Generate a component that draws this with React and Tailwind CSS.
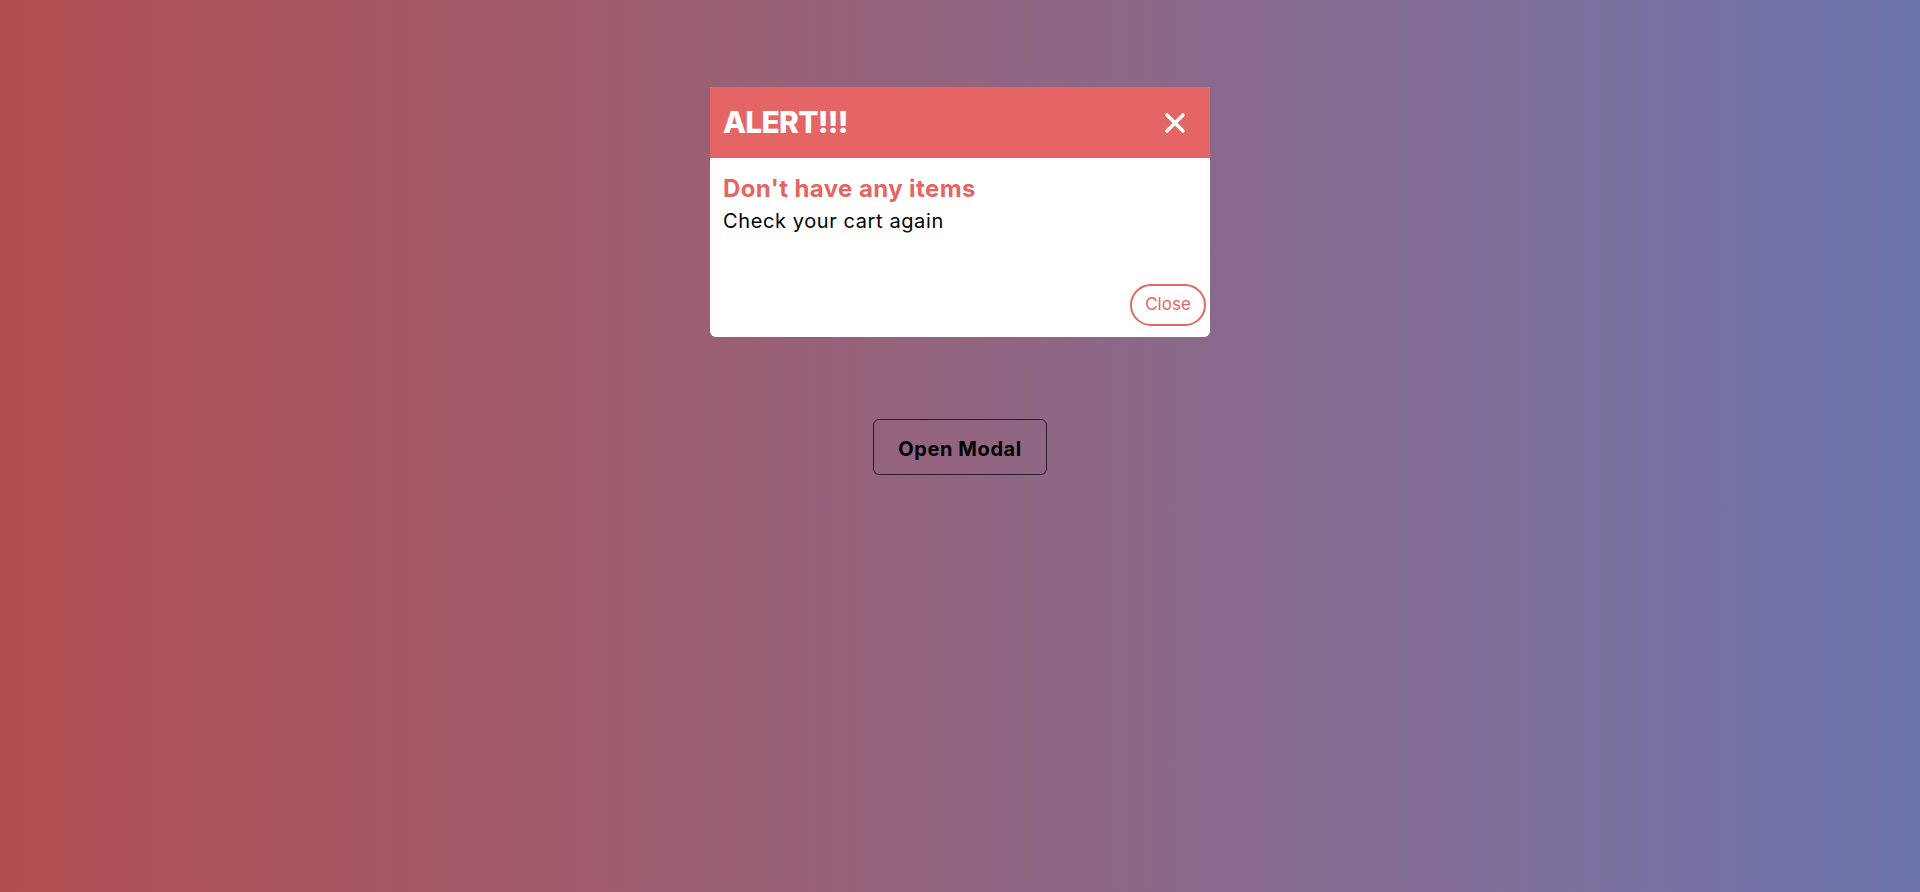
import React from 'react';

export default function App() {
  return (
    <div className="min-h-screen w-full bg-gradient-to-r from-[#b24d4f] to-[#6b73ac] font-['Inter','Noto_Sans',sans-serif] flex flex-col items-center">
      <div className="mt-[87px] w-[500px] h-[250px] bg-white rounded-b-md flex flex-col">
        <div className="h-[71px] bg-[#e56565] flex items-center justify-between pl-[13px] pr-[24px]">
          <h1 className="text-[30px] font-extrabold text-white tracking-tight">ALERT!!!</h1>
          <button className="text-white">
            <svg width="22" height="22" viewBox="0 0 22 22" fill="none">
              <path d="M3 3 L19 19 M19 3 L3 19" stroke="white" strokeWidth="3.6" strokeLinecap="round" />
            </svg>
          </button>
        </div>
        <div className="flex-1 flex flex-col pl-[13px] pt-[16px] pr-[4px] pb-[11px]">
          <h2 className="text-[24px] leading-[30px] font-bold text-[#e56565] tracking-[0.4px]">Don't have any items</h2>
          <p className="text-[20px] leading-[34px] text-black tracking-[0.6px]">Check your cart again</p>
          <div className="mt-auto flex justify-end">
            <button className="w-[76px] h-[42px] rounded-full border-2 border-[#e56565] text-[#e56565] text-[17px]">Close</button>
          </div>
        </div>
      </div>
      <button className="mt-[82px] w-[174px] h-[56px] border border-[#2a1a2a] rounded-md text-[20px] font-bold text-black tracking-[0.6px] pt-[3px]">
        Open Modal
      </button>
    </div>
  );
}
